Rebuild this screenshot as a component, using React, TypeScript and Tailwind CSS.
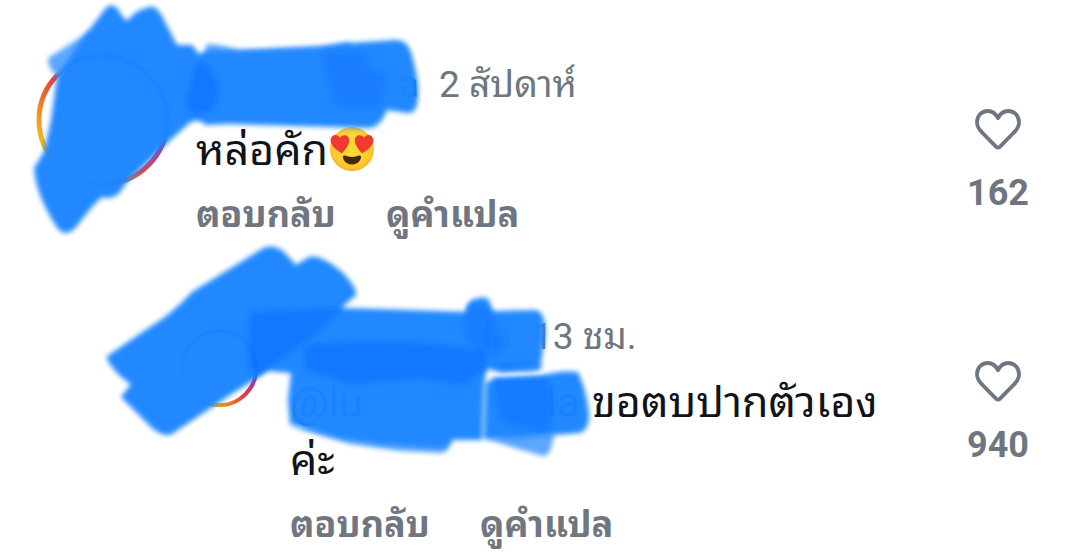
import React, { useState } from "react";

interface CommentData {
  id: string;
  age: string;
  name: string;
  mention?: boolean;
  text: string;
  lovesIt?: boolean;
  likes: number;
  isReply?: boolean;
}

const COMMENTS: CommentData[] = [
  { id: "c1", name: "a", age: "2 สัปดาห์", text: "หล่อคัก", lovesIt: true, likes: 162 },
  { id: "c2", name: "la", age: "13 ชม.", text: "ขอตบปากตัวเอง ค่ะ", mention: true, likes: 940, isReply: true },
];

function HeartIcon({ filled }: { filled: boolean }) {
  return (
    <svg viewBox="0 0 46 42" className="w-[46px] h-[42px]" fill={filled ? "#6f7680" : "none"} aria-hidden="true">
      <path
        d="M23 9.2C20.8 4.8 17.2 2 12.8 2C6.4 2 2 7 2 13.2C2 17.6 4.2 20.8 7.6 24L21.2 37.8C22.4 39 23.6 39 24.8 37.8L38.4 24C41.8 20.8 44 17.6 44 13.2C44 7 39.6 2 33.2 2C28.8 2 25.2 4.8 23 9.2Z"
        stroke="#6f7680"
        strokeWidth="3.8"
        strokeLinejoin="round"
      />
    </svg>
  );
}

function HeartEyes() {
  return (
    <svg viewBox="0 0 48 46" className="inline-block w-[48px] h-[46px] align-[-7px]" role="img" aria-label="😍">
      <defs>
        <radialGradient id="face" cx="50%" cy="45%" r="55%">
          <stop offset="0.5" stopColor="#fdd835" />
          <stop offset="0.9" stopColor="#fbc12c" />
          <stop offset="1" stopColor="#eda427" />
        </radialGradient>
      </defs>
      <circle cx="24" cy="23" r="22" fill="url(#face)" />
      <path d="M14 27.5C8 24 2 19 2.6 13.6C3.2 8.2 9.6 7.4 12 11.8C15 7.4 21.6 9.2 21.2 14.8C21 19.4 17 24 14 27.5Z" fill="#f0392f" />
      <path d="M34 27.5C31 24 27 19.4 26.8 14.8C26.4 9.2 33 7.4 36 11.8C38.4 7.4 44.8 8.2 45.4 13.6C46 19 40 24 34 27.5Z" fill="#f0392f" />
      <path d="M17 29.6C21 31.4 27 31.4 31 29.6C32.4 29 33.4 30 33 31.8C32 36 28.4 38.6 24 38.6C19.6 38.6 16 36 15 31.8C14.6 30 15.6 29 17 29.6Z" fill="#422b0d" />
    </svg>
  );
}

function Avatar({ small }: { small?: boolean }) {
  const ringId = small ? "ring-small" : "ring-large";

  return (
    <svg viewBox="0 0 134 134" className={`shrink-0 ${small ? "w-[78px] h-[78px] mt-6" : "w-[134px] h-[134px]"}`} aria-hidden="true">
      <defs>
        <linearGradient id={ringId} x1="0" y1="1" x2="1" y2="0">
          <stop offset="0.14" stopColor="#f2c81e" />
          <stop offset="0.28" stopColor="#ec9220" />
          <stop offset="0.46" stopColor="#e5443c" />
          <stop offset="0.62" stopColor="#c22c86" />
          <stop offset="0.78" stopColor="#8a3ab9" />
        </linearGradient>
      </defs>
      <circle cx="67" cy="67" r="64" fill="none" stroke={`url(#${ringId})`} strokeWidth={small ? 7 : 5} />
    </svg>
  );
}

// Marker strokes that hide the names and faces
function Redaction() {
  return (
    <svg viewBox="0 0 640 480" className="absolute left-0 top-0 w-[640px] h-[480px] pointer-events-none opacity-[0.98]" aria-hidden="true">
      <defs>
        <filter id="soft" x="-5%" y="-5%" width="110%" height="110%">
          <feGaussianBlur stdDeviation="2.4" />
        </filter>
      </defs>
      <g filter="url(#soft)" fill="#5aa5ff">
        <path d="M48 58L92 30L100 60L58 76Q48 70 48 58Z" />
        <path d="M206 44Q215 43 240 50L320 46L350 42V60H206Z" />
        <path d="M290 426L350 444L400 451L442 453Q450 452 451 438L400 430Z" />
        <path d="M485 438L515 448L543 456Q552 456 554 432Z" />
      </g>
      <g filter="url(#soft)" fill="#1a86ff">
        <path d="M86 34L106 8Q114 0 122 16L127 21Q136 10 146 8Q156 2 164 20L177 45L192 45L199 54L208 50L240 51L320 48L350 43L395 40Q406 39 411 52Q419 80 418 95Q418 113 408 113L387 110Q380 128 368 128L230 124L206 125Q196 116 186 126L164 146L147 163L126 183Q116 202 102 197Q92 206 80 222Q66 242 56 226Q36 195 34 168L44 152L51 120L56 84L58 74Z" />
        <path d="M106 357L150 327Q172 314 192 292L262 249Q272 243 284 252L296 265L309 257Q320 254 342 272Q360 291 355 296L341 308L380 309L466 312Q466 299 480 298Q490 294 492 311L535 310Q546 311 545 336L540 369L500 372L487 369L484 383L482 440L452 440Q446 450 436 448L380 444L340 438L290 424L288 400L291 373L268 371L230 395L172 434Q164 438 152 428L121 397L131 384Q114 374 106 357Z" />
        <path d="M486 382L496 379L540 376Q560 370 578 372Q588 394 589 417Q588 432 578 433L554 435L520 439L484 439Z" />
      </g>
      <g filter="url(#soft)" fill="#0d75ff">
        <path d="M196 64Q206 58 211 72Q220 88 218 95Q214 114 198 114Q184 112 187 100Z" />
        <path d="M322 50L366 54L369 69L386 73Q386 92 378 108L350 107L335 105L328 82Z" opacity="0.65" />
        <path d="M250 312L342 308Q322 328 305 342L278 361L256 376L248 367Z" />
        <path d="M305 345Q400 336 474 350L486 354L485 369L464 385L424 378L352 384L328 376L304 370Z" />
        <path d="M466 312Q468 302 478 304L492 310Q495 330 503 342L498 356L476 352L464 330Z" opacity="0.7" />
        <path d="M492 378L546 377L553 405L548 432L516 426L500 418Z" opacity="0.85" />
        <path d="M496 364L544 366L534 371L500 371Z" opacity="0.7" />
      </g>
    </svg>
  );
}

function Comment({ comment }: { comment: CommentData }) {
  const [liked, setLiked] = useState<boolean>(false);
  const { isReply } = comment;

  return (
    <article className={`flex items-start ${isReply ? "pl-[180px] gap-8" : "pl-9 gap-[26px]"}`}>
      <Avatar small={isReply} />
      <div className="flex-1 min-w-0">
        <header className="flex gap-5 text-[37px] leading-[64px] text-[#6f7680]">
          <span className={`text-right text-[#33507c] ${isReply ? "w-[222px]" : "w-[223px]"}`}>{comment.name}</span>
          <time className="whitespace-nowrap">{comment.age}</time>
        </header>
        <p className="mt-1 flex flex-wrap text-[43px] leading-[58px] text-[#101418]">
          {comment.mention && (
            <span className="flex justify-between w-[290px] mr-3 text-[#0a1c50]">
              <span>@lu</span>
              <span>la</span>
            </span>
          )}
          {comment.text.split(" ").map((word) => (
            <span key={word} className="whitespace-nowrap">
              {word}
            </span>
          ))}
          {comment.lovesIt && (
            <span>
              <HeartEyes />
            </span>
          )}
        </p>
        <div className="flex gap-[50px] text-[36px] leading-[72px] font-bold text-[#6f7680]">
          <button className="cursor-pointer">ตอบกลับ</button>
          <button className="cursor-pointer">ดูคำแปล</button>
        </div>
      </div>
      <button
        onClick={() => setLiked(!liked)}
        aria-label="ถูกใจ"
        aria-pressed={liked}
        className="w-[148px] shrink-0 mt-14 flex flex-col items-center gap-5 text-[36px] leading-[44px] font-bold text-[#6f7680] cursor-pointer"
      >
        <HeartIcon filled={liked} />
        <span>{comment.likes + (liked ? 1 : 0)}</span>
      </button>
    </article>
  );
}

export default function App() {
  return (
    <main
      lang="th"
      className="relative min-h-screen overflow-hidden bg-white pt-[53px] flex flex-col gap-[54px] font-[Roboto,'Noto_Sans_Thai_Looped','Noto_Sans_Thai','Noto_Sans',sans-serif]"
    >
      {COMMENTS.map((c) => (
        <Comment key={c.id} comment={c} />
      ))}
      <Redaction />
    </main>
  );
}
